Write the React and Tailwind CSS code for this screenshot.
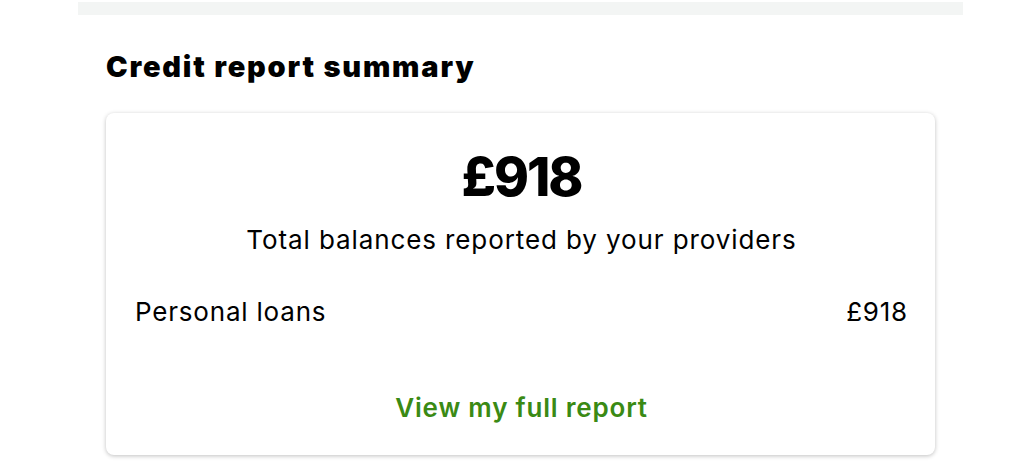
import React from 'react';

export default function App() {
  return (
    <div className="min-h-screen bg-white" style={{ fontFamily: 'Inter, "Liberation Sans", sans-serif' }}>
      <div className="ml-[78px] w-[885px] pt-[2px]">
        <div className="h-[13px] bg-[#f3f5f4]" />
      </div>

      <div className="ml-[106px] w-[829px]">
        <h2 className="mt-[32px] text-[29px] leading-[40px] font-black text-black tracking-[1.8px]">
          Credit report summary
        </h2>

        <div className="mt-[26px] h-[342px] rounded-lg bg-white shadow-[0_1px_4px_rgba(0,0,0,0.25)] pl-[29px] pr-[27px] pt-[32px] flex flex-col">
          <div className="text-center text-[53px] leading-[64px] font-extrabold text-black tracking-[-2px]">
            £918
          </div>
          <p className="mt-[15px] text-center text-[26px] leading-[32px] text-black tracking-[0.9px]">
            Total balances reported by your providers
          </p>

          <div className="mt-[40px] flex justify-between text-[26px] leading-[32px] text-black tracking-[0.8px]">
            <span>Personal loans</span>
            <span>£918</span>
          </div>

          <div className="mt-[64px] text-center">
            <a href="#" className="text-[26px] leading-[32px] font-semibold text-[#3a8a14] tracking-[0.8px]">
              View my full report
            </a>
          </div>
        </div>
      </div>
    </div>
  );
}
